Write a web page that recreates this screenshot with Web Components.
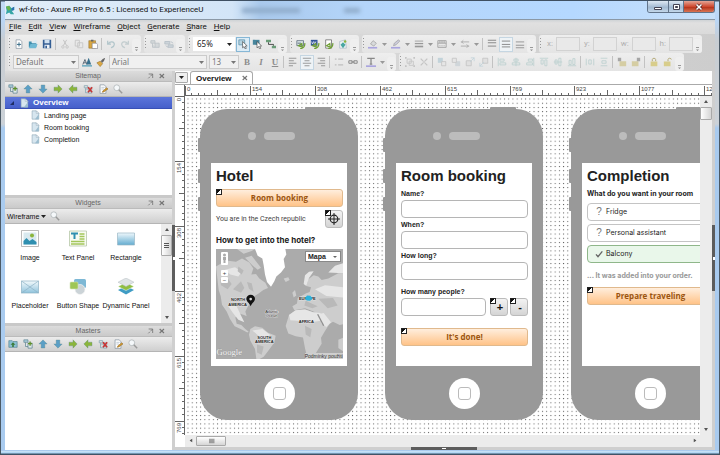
<!DOCTYPE html>
<html lang="en">
<head>
<meta charset="utf-8">
<title>wf-foto - Axure RP Pro 6.5</title>
<style>
  html, body { height: 100%; }
  body { margin: 0; font-family: "Liberation Sans", sans-serif; font-size: 7px; color: #222; background: #44535f; overflow: hidden; }
</style>
</head>
<body>
<ax-window>
  <ax-titlebar slot="title">wf-foto - Axure RP Pro 6.5 : Licensed to ExperienceU</ax-titlebar>
  <ax-menubar slot="menu" items="File,Edit,View,Wireframe,Object,Generate,Share,Help"></ax-menubar>

  <ax-toolrow slot="tools">
    <ax-group icons="new,open,save,|,cut,copy,paste,|,undo,redo"></ax-group>
    <ax-group icons="tree-off,swap-off"></ax-group>
    <ax-group icons="point!,select,connect"><ax-combo value="65%" label="Zoom" wide="42"></ax-combo></ax-group>
    <ax-group icons="gen1,gen2,gen3,gen4"></ax-group>
    <ax-group icons="fill,v,line,v,width,v,pattern,v,arrows,v,|,vtop,vmid!,vbot"></ax-group>
    <ax-group><ax-coord name="x"></ax-coord><ax-coord name="y"></ax-coord><ax-coord name="w"></ax-coord><ax-coord name="h"></ax-coord></ax-group>
  </ax-toolrow>
  <ax-toolrow slot="tools">
    <ax-group icons="bold,italic,under,|,left,center!,right,|,bullets,link,|,tcolor,v">
      <ax-combo value="Default" label="Style" wide="66" dim></ax-combo>
      <ax-tool name="styles"></ax-tool><ax-tool name="brush"></ax-tool>
      <ax-combo value="Arial" label="Font" wide="98" dim></ax-combo>
      <ax-combo value="13" label="Size" wide="30" dim></ax-combo>
    </ax-group>
    <ax-group icons="group,ungroup,|,front,back,fwd,bwd,|,al,ac,ar,at,am,ab,|,dh,dv,|,lock1,lock2,|,pad,unpad"></ax-group>
  </ax-toolrow>

  <ax-sidebar slot="side">
    <ax-panel heading="Sitemap" icons="addtree,up,down,rightg,leftg,delete,rename,find">
      <ax-tree></ax-tree>
    </ax-panel>
    <ax-panel heading="Widgets" library="Wireframe">
      <ax-library></ax-library>
    </ax-panel>
    <ax-panel heading="Masters" icons="addfolder,addtree,up,down,rightg,leftg,delete,rename,find"></ax-panel>
  </ax-sidebar>

  <ax-editor slot="main">
    <ax-phone style="left:15px">
      <ax-heading>Hotel</ax-heading>
      <ax-action noted>Room booking</ax-action>
      <ax-locate>You are in the Czech republic</ax-locate>
      <ax-caption size="large">How to get into the hotel?</ax-caption>
      <ax-map></ax-map>
    </ax-phone>
    <ax-phone style="left:200px">
      <ax-heading>Room booking</ax-heading>
      <ax-field label="Name?"></ax-field>
      <ax-field label="When?"></ax-field>
      <ax-field label="How long?"></ax-field>
      <ax-field label="How many people?" stepper></ax-field>
      <ax-action noted>It's done!</ax-action>
    </ax-phone>
    <ax-phone style="left:386px">
      <ax-heading>Completion</ax-heading>
      <ax-caption>What do you want in your room</ax-caption>
      <ax-options></ax-options>
      <ax-caption muted>... It was added into your order.</ax-caption>
      <ax-action noted>Prepare traveling</ax-action>
    </ax-phone>
  </ax-editor>
</ax-window>

<script>
const G = '#8bb53c', B = '#5b9fc6', N = '#9a9a9a', L = '#c4c4c4', T = '#bcd0cf';
const page = '<path d="M2.500 1h5l2 2.300v8h-7z" fill="#fff" stroke="#7d8c9a" stroke-width=".8"/>';
const lines = (c, xs) => xs.map(([x1, x2, y]) => `<path d="M${x1} ${y}H${x2}" stroke="${c}"/>`).join('');
const treeBox = c => `<path d="M1.500 2h4v2.500h-4zM6.500 4.500h4v3h-4zM6.500 9h4v2h-4zM3 5v5.500h3M3 6h3" fill="none" stroke="${c}"/>`;
const arrow = (c, r) => `<path transform="rotate(${r} 6 6)" d="M6 1l5 5H8.200v4.800H3.800V6H1z" fill="${c}" stroke="#5a8a8a" stroke-width=".4"/>`;
const alignBars = d => `<path d="${d}" fill="none" stroke="${T}"/>`;
const leaf = `<path d="M5 11.500c4 0 6-3 5.500-6.500M3 8l4-2.500L7.500 10z" fill="none" stroke="#6f9f35" stroke-width="1.500"/>`;
const ICONS = {
  new: page + '<path d="M6 4v5M3.500 6.500h5" stroke="#3a6d88" stroke-width="1.200"/>',
  open: '<path d="M1 10V3h3l1 1h5v6z" fill="#3f8eae"/><path d="M4 4l6-3 1 4H5z" fill="#d9eaf2"/><path d="M1 11l2-5h8.500l-2 5z" fill="#6fb9d4"/>',
  save: '<path d="M1 1h10v10H1z" fill="#345e94"/><path d="M3 1h6v4H3z" fill="#cfe0f0"/><path d="M3 7h6v4H3z" fill="#eef3f8"/><path d="M4 8h2v3H4z" fill="#345e94"/>',
  cut: `<path d="M4 1l4 7M8 1L4 8" stroke="${L}" stroke-width="1.200"/><circle cx="3.500" cy="9.500" r="1.500" fill="none" stroke="${L}"/><circle cx="8.500" cy="9.500" r="1.500" fill="none" stroke="${L}"/>`,
  copy: `<path d="M1.500 1.500h5v7h-5zM4.500 4.500h6v6h-6z" fill="#e8e8e8" stroke="${L}"/>`,
  paste: '<path d="M1 2h8v9H1z" fill="#d9a640" stroke="#8a6a28" stroke-width=".6"/><path d="M3.500 1h3v2h-3z" fill="#666"/><path d="M5 5h5l1.500 1.500V11.500H5z" fill="#fff" stroke="#778" stroke-width=".7"/>',
  undo: '<path d="M2 2v4h4M2.500 6C5 2 10 3 10 6.500 10 9 7 10 6 10.500" fill="none" stroke="#b3c6cb" stroke-width="1.500"/>',
  redo: '<path d="M10 2v4H6M9.500 6C7 2 2 3 2 6.500 2 9 5 10 6 10.500" fill="none" stroke="#c3cdcf" stroke-width="1.500"/>',
  'tree-off': `<path d="M1 2h5v3H1zM6 5h5v5H6zM3 5v5h3" fill="#d4d8da" stroke="#bcc3c6"/>`,
  'swap-off': `<path d="M1 3h6v3H1zM5 7h6v3H5zM8 3l3 2M2 8l3 2" fill="#cdd4da" stroke="#b5bec6"/>`,
  point: '<path d="M1 1h7v6H1z" fill="#b5d3e0" stroke="#4e87a0" stroke-width=".8"/><path d="M5.500 3l5.500 5.300-2.300.2 1.300 2.700-1.500.6-1.200-2.700-1.800 1.500z" fill="#fff" stroke="#333" stroke-width=".7"/>',
  select: '<path d="M1 1h8v6H1z" fill="#47859c"/><path d="M6 3l5.500 5.300-2.300.2 1.300 2.700-1.500.6-1.200-2.700-1.800 1.500z" fill="#fff" stroke="#333" stroke-width=".7"/>',
  connect: '<path d="M0 1h6v3H0zM7 8h5v3H7z" fill="#6a9c78"/><path d="M3 4v2.500h6V8" fill="none" stroke="#333"/>',
  gen1: '<path d="M1 2h8v6H1z" fill="#dce7ea" stroke="#456" stroke-width=".8"/><path d="M2 5h4" stroke="#456"/>' + leaf,
  gen2: '<path d="M1 1h8v7H1z" fill="#31559a"/><path d="M2 3l1 3 1.500-3L6 6l1-3" fill="none" stroke="#fff" stroke-width=".8"/>' + leaf,
  gen3: '<path d="M2 1h7v10H2z" fill="#fff" stroke="#555" stroke-width=".8"/>' + leaf,
  gen4: '<path d="M2 3l7-2 1 10H2z" fill="#eef4f4" stroke="#9ab" stroke-width=".7"/><path d="M3 7l3-3 3 3-3 4z" fill="#49a6a2"/><circle cx="8.500" cy="3" r="1.500" fill="#8bb53c"/>',
  fill: `<path d="M3 6l3-4 4 3-3 3.500z" fill="#d8dadc" stroke="${N}" stroke-width=".8"/><path d="M0 9.500h11v2H0z" fill="#a9a4de"/>`,
  line: `<path d="M3 8l1-3 5-4 1.500 1.500L6 7z" fill="#ccd" stroke="${N}" stroke-width=".8"/><path d="M0 9.500h11v2H0z" fill="#a9a4de"/>`,
  width: `<path d="M1 2.500h10" stroke="#999"/><path d="M1 5.500h10" stroke="#999" stroke-width="1.500"/><path d="M1 9h10" stroke="#999" stroke-width="2"/>`,
  pattern: `<path d="M1 2h10v8H1zM1 5h10M3.500 2v3M6 2v3M8.500 2v3M3 8h1M5.500 8h1M8 8h1" fill="none" stroke="${N}"/>`,
  arrows: `<path d="M1 3.500h10M1 8.500h10M4 1.500L2 3.500l2 2M8 6.500l2 2-2 2" fill="none" stroke="#a5a5a5"/>`,
  vtop: lines('#777', [[1, 11, 1.5], [1, 11, 4.5], [1, 11, 8.5]]),
  vmid: lines('#777', [[1, 11, 2.5], [1, 11, 6.5], [1, 11, 9.5]]),
  vbot: lines('#888', [[1, 11, 3.5], [1, 11, 7.5], [1, 11, 10.5]]),
  left: lines('#888', [[1, 10, 1.5], [1, 7, 4.5], [1, 10, 7.5], [1, 6, 10.5]]),
  center: lines('#888', [[1, 11, 1.5], [3, 9, 4.5], [1, 11, 7.5], [3, 9, 10.5]]),
  right: lines('#888', [[2, 11, 1.5], [5, 11, 4.5], [2, 11, 7.5], [6, 11, 10.5]]),
  bullets: lines('#aaa', [[1, 3, 2.5], [5, 11, 2.5], [1, 3, 9.5], [5, 11, 9.5]]),
  link: '<path d="M1 4.500h4v3H1zM7 4.500h4v3H7zM4 6h4" fill="none" stroke="#8b8b8b" stroke-width="1.200"/>',
  tcolor: '<path d="M1.500 1.500h9M6 1.500v7M4.500 8.500h3" stroke="#888" stroke-width="1.500"/><path d="M0 10h12v2H0z" fill="#a9a4de"/>',
  styles: '<path d="M1 9l2.500-6L6 9M2 7h3" fill="none" stroke="#456"/><path d="M5 9l3-8 3 8z" fill="#38708e"/><path d="M0 10h12v1.500H0z" fill="#4f9db8"/>',
  brush: '<path d="M1 7l4-2 3 3-3 3.500z" fill="#dba742" stroke="#8a6a28" stroke-width=".6"/><path d="M5.500 5L8 2.500l3-1.500-1 3-2 3z" fill="#666"/>',
  group: `<path d="M2.500 2.500h5v5h-5zM5 5h5v5H5z" fill="none" stroke="${L}"/><path d="M0 0h2v2H0zM10 0h2v2h-2zM0 10h2v2H0zM10 10h2v2h-2z" fill="${L}"/>`,
  ungroup: `<path d="M2 2l3 3M10 2L7 5M2 10l3-3M10 10L7 7" stroke="${L}" stroke-width="1.500"/><path d="M5 5h2v2H5z" fill="${L}"/>`,
  front: `<path d="M1 1h6v6H1z" fill="#c2d3da"/><path d="M5.500 5.500h5v5h-5z" fill="#e6e6e6" stroke="${L}"/>`,
  back: `<path d="M5 5h6v6H5z" fill="#d0d6da"/><path d="M1.500 1.500h5v5h-5z" fill="#e6e6e6" stroke="${L}"/>`,
  fwd: `<path d="M1.500 4.500h6v6h-6z" fill="#e0e0e0" stroke="${L}"/><path d="M6 6l5-5M7 1h4v4" fill="none" stroke="#c2d3da"/>`,
  bwd: `<path d="M4.500 1.500h6v6h-6z" fill="#e0e0e0" stroke="${L}"/><path d="M6 6l-5 5M1 7v4h4" fill="none" stroke="#c2d3da"/>`,
  al: alignBars('M1.500 1v10M3.500 2.500h5v2.500h-5zM3.500 7h7v2.500h-7z'),
  ac: alignBars('M6 1v10M3.500 2.500h5v2.500h-5zM1.500 7h9v2.500h-9z'),
  ar: alignBars('M10.500 1v10M4 2.500h5v2.500H4zM2 7h7v2.500H2z'),
  at: alignBars('M1 1.500h10M2.500 3.500h2.500v5H2.500zM7 3.500h2.500v7H7z'),
  am: alignBars('M1 6h10M2.500 3.500h2.500v5H2.500zM7 1.500h2.500v9H7z'),
  ab: alignBars('M1 10.500h10M2.500 4h2.500v5H2.500zM7 2h2.500v7H7z'),
  dh: alignBars('M1.500 2v8M10.500 2v8M4.500 3.500h3v5h-3z'),
  dv: alignBars('M2 1.500h8M2 10.500h8M3.500 4.500h5v3h-5z'),
  lock1: `<path d="M3 5h8v6H3z" fill="#d5cda3"/><path d="M1 1h4v4H1z" fill="#a6a6a6"/>`,
  lock2: `<path d="M1 5h8v6H1z" fill="#d5cda3"/><path d="M7 1h4v4H7z" fill="#a6a6a6"/>`,
  pad: '<path d="M2 5.500h8V11H2z" fill="#d8cd8b"/><path d="M4 5V3c0-2 4-2 4 0v2" fill="none" stroke="#b5ac7c" stroke-width="1.200"/>',
  unpad: '<path d="M1 5.500h8V11H1z" fill="#d8cd8b"/><path d="M6 5V3c0-2 4-2 4 0" fill="none" stroke="#b5ac7c" stroke-width="1.200"/>',
  addtree: `<path d="M1 1h5v3H1z" fill="#a9cbd8" stroke="#53798a" stroke-width=".7"/><path d="M6 5h5v6H6zM3 4v5h3" fill="#dfe9ea" stroke="#53798a" stroke-width=".8"/><path d="M8.500 3v5M6 5.500h5" stroke="#5f8f2c" stroke-width="1.600"/>`,
  addfolder: '<path d="M1 10V2h4l1 1h5v7z" fill="#8cc0d2" stroke="#48798c" stroke-width=".7"/><path d="M6 4l3 3H7v2.500H5V7H3z" fill="#3d7c3c"/>',
  up: arrow(B, 0), down: arrow(B, 180), rightg: arrow(G, 90), leftg: arrow(G, 270),
  delete: treeBox('#8ba9b5') + '<path d="M6 4l5 6M11 4l-5 6" stroke="#cb3232" stroke-width="1.800"/>',
  rename: page + '<path d="M4 4h4M4 6h3" stroke="#9ab" stroke-width=".7"/><path d="M5 10l1-2 4.500-3.500 1.500 1.500L7 9.500z" fill="#d59c2f" stroke="#765015" stroke-width=".5"/>',
  find: '<circle cx="4.500" cy="4.500" r="3.500" fill="#f5f8fa" stroke="#b2b8bb"/><path d="M7 7l4 4" stroke="#9b9b9b" stroke-width="1.800"/>',
  doc: '<path d="M2.500 1h5l3 3v7h-8z" fill="#d7e6ef" stroke="#8ca5b5" stroke-width=".7"/><path d="M7.500 1v3h3z" fill="#fff" stroke="#8ca5b5" stroke-width=".6"/><path d="M6 11l4.500-6v6z" fill="#9cbdcf"/>',
  pin: '<path d="M2.500 3h6v6M8.500 3L5.500 6M2 9.500l2.500-2.500" fill="none" stroke="#777" stroke-width="1.300"/>',
  close: '<path d="M2.500 3l6.500 6M9 3l-6.500 6" stroke="#777" stroke-width="1.700"/>',
  target: '<circle cx="6" cy="6" r="3.800" fill="none" stroke="#222" stroke-width="1.200"/><path d="M6 0v12M0 6h12" stroke="#222"/>',
  check: '<path d="M1.500 6.500l3 3.500L11 2" fill="none" stroke="#666" stroke-width="2"/>',
  logo: '<path d="M1 2l4-1 3 3 3-2v4L8 7l3 4H7L5 9l-4 2 1-4z" fill="#35a6a6"/><path d="M1 2l4-1 2 4-3 2z" fill="#6ab54b"/><path d="M8 4l3-2v4L8 7z" fill="#2b6fb0"/>',
  image: '<path d="M.5.500h17v16H.500z" fill="#fff" stroke="#aaa" stroke-width=".8"/><path d="M2.500 2.500h13v12h-13z" fill="#d9e9ef"/><circle cx="11" cy="5.500" r="2" fill="#8bb53c"/><path d="M2.500 14.500V11l3-3 3 3 3-2 4 3v2.500z" fill="#2f8fb0"/>',
  text: '<path d="M.5 1h17v15H.500z" fill="#f8fbf2" stroke="#b8c8a8" stroke-width=".8"/><path d="M2 3.500h7M5.500 3.500V9" stroke="#2f8fb0" stroke-width="2"/><path d="M10.500 4h5M10.500 6.500h5M10.500 9h5M2 11.500h13.500M2 14h13.500" stroke="#a3c65a" stroke-width="1.300"/>',
  rect: '<defs><linearGradient id="g" x2="0" y2="1"><stop stop-color="#eff8fc"/><stop offset="1" stop-color="#63acd0"/></linearGradient></defs><path d="M.5 3h17v12H.500z" fill="url(#g)" stroke="#9bb7c5" stroke-width=".7"/>',
  placeholder: '<defs><linearGradient id="h" x2="0" y2="1"><stop stop-color="#f4fafc"/><stop offset="1" stop-color="#8fc3dc"/></linearGradient></defs><path d="M.5 3h17v12H.500zM.5 3l17 12M17.500 3L.500 15" fill="url(#h)" stroke="#8db2c4" stroke-width=".7"/>',
  shape: '<rect x="5" y="1" width="12" height="9" rx="1.500" fill="#7db8d5"/><circle cx="11" cy="11.500" r="5" fill="#cbd3d7" stroke="#f3f3f3" stroke-width=".7"/><rect x="1" y="4" width="8" height="7" rx="1" fill="#9ec655" stroke="#d4e4b8" stroke-width=".6"/>',
  dynamic: '<path d="M9 8l8 4-8 4.500L1 12z" fill="#3f9cc4"/><path d="M9 4.500l8 4-8 4-8-4z" fill="#8fbe41" stroke="#fff" stroke-width=".5"/><path d="M9 0l8 4.200-8 4.300-8-4.300z" fill="#dfe4e6" stroke="#b5bdc0" stroke-width=".5"/>'
};
const LETTERS = { bold: '<b>B</b>', italic: '<i>I</i>', under: '<u>U</u>' };
const svg = (name, size = 10) => {
  const box = ['image', 'text', 'rect', 'placeholder', 'shape', 'dynamic'].includes(name) ? 18 : 12;
  return `<svg width="${size}" height="${size}" viewBox="0 0 ${box} ${box}" fill="none" aria-hidden="true">${ICONS[name] || ''}</svg>`;
};
const RESET = `:host,*{box-sizing:border-box} button,input,select{font:inherit;color:inherit;margin:0;padding:0;border:0;background:none;border-radius:0;min-width:0} svg{display:block;flex:none}`;
const NOTE = `.note{position:absolute;left:0;top:0;width:6px;height:6px;border:1px solid #222;background:linear-gradient(135deg,#111 50%,#fff 50%)}`;
const define = (tag, render) => customElements.define(tag, class extends HTMLElement {
  connectedCallback() {
    if (this.shadowRoot) return;
    const root = this.attachShadow({ mode: 'open' });
    const t = document.createElement('template');
    t.innerHTML = render(this).replace('<style>', '<style>' + RESET);
    root.append(t.content.cloneNode(true));
  }
});

define('ax-window', () => `<style>
  :host{display:grid;grid-template-rows:auto auto auto minmax(0,1fr);height:100vh;padding:1px 5px 5px;overflow:hidden;border-radius:4px;
    background:linear-gradient(90deg,#4c5a66 1px,transparent 1px,transparent calc(100% - 1px),#4c5a66 calc(100% - 1px)),
    linear-gradient(0deg,#3f5468 1px,#a9d4f5 2px,#cfe4f6 4px,transparent 4px),
    linear-gradient(180deg,#3f5062 1px,#c3dbf4 2px,#b9d7f8 19px,#c8cdd2 40px,#ccd2d8 124px,#a9cbef 128px)}
  .tools{background:linear-gradient(90deg,#e0e0e0,#dadada 40%,#cdcdcd);padding:1px 3px 0;display:grid;gap:1px}
  .body{display:grid;grid-template-columns:167px 3px minmax(0,1fr) 3px;grid-template-rows:minmax(0,1fr) 3px;background:#cfcfcf;min-height:0}
  slot{display:block;min-height:0}
  slot[name=side]{grid-area:1/1/3/2}
  slot[name=main]{grid-area:1/3}
  .grip{grid-area:1/2;background:#5d5d5d;align-self:center;height:66px;margin-bottom:2px;display:grid;place-items:center}
  .grip.end{grid-area:1/4}
  .grip::after{content:"";width:2px;height:3px;background:#fff}
  .grip.foot{grid-area:2/3;width:66px;height:3px;justify-self:center;margin:0}
  .grip.foot::after{width:4px;height:1px}
  </style><slot name="title"></slot><slot name="menu"></slot><div class="tools"><slot name="tools"></slot></div>
  <div class="body"><slot name="side"></slot><div class="grip"></div><slot name="main"></slot><div class="grip end"></div><div class="grip foot"></div></div>`);

define('ax-titlebar', () => `<style>
  :host{display:flex;align-items:center;height:18px;font:8px/10px Roboto,sans-serif;color:#111;gap:4px;
   background:linear-gradient(90deg,#e1edf8 0,#d3e5f7 32%,#a9c9ec 36%,#b4d5fa 50%,#b5d8ff 80%,#c8e0f8)}
  .ghost{display:flex;gap:44px;margin-left:34px;flex:1;filter:blur(2px)}
  .ghost i{width:58px;height:5px;background:#8fabc9}.ghost i+i{width:16px}
  .ctl{display:flex;align-self:flex-start;border:1px solid #61748a;border-top:0;border-radius:0 0 3px 3px;overflow:hidden}
  button{height:11px;width:21px;display:grid;place-items:center;background:linear-gradient(#dde8f3,#a9bfd6 50%,#9cb5cd 51%,#c3d7ea);border-right:1px solid #61748a}
  button:nth-child(2){width:15px}
  button:last-child{width:30px;border:0;background:linear-gradient(#e3a596,#cf4a31 50%,#b22c14 51%,#d87554)}
  </style>${svg('logo')}<span><slot></slot></span><div class="ghost"><i></i><i></i></div>
  <div class="ctl"><button aria-label="Minimize"><svg width="10" height="8"><path d="M1.500 4.500h7v2h-7z" fill="#fff" stroke="#445"/></svg></button>
  <button aria-label="Maximize"><svg width="9" height="8"><path d="M1.500 1.500h6v5h-6z" fill="#fff" stroke="#445"/><path d="M3.500 3.500h2v1h-2z" stroke="#445"/></svg></button>
  <button aria-label="Close"><svg width="8" height="8"><path d="M1.500 1.500l5 5M6.500 1.500l-5 5" stroke="#522" stroke-width="3"/><path d="M1.500 1.500l5 5M6.500 1.500l-5 5" stroke="#fff" stroke-width="1.500"/></svg></button></div>`);

define('ax-menubar', el => `<style>
  :host{display:flex;gap:7px;height:15px;padding-left:4px;align-items:center;font:8px/12px Roboto,sans-serif;background:linear-gradient(#cfd3d6,#e0e0e0 3px,#dadada);border-top:1px solid #8b98a5;color:#111}
  </style>${el.getAttribute('items').split(',').map(i => `<button><u>${i[0]}</u>${i.slice(1)}</button>`).join('')}`);

define('ax-toolrow', () => `<style>:host{display:flex;gap:3px;height:18px;min-width:0}</style><slot></slot>`);

define('ax-tool', el => { const n = el.getAttribute('name'); return `<style>
  :host{display:block;flex:none}
  button{display:grid;place-items:center;width:14px;height:15px;font:bold 9px/12px "Liberation Serif",serif;color:#8d8d8d}
  :host([active]) button{border:1px solid #86b7d6;background:#dcecf6}
  :host([dim][active]) button{border-color:#c5d6e2;background:#eef3f6}
  </style><button aria-label="${n}">${LETTERS[n] || svg(n)}</button>`; });

define('ax-group', el => `<style>
  :host{display:flex;align-items:center;background:linear-gradient(#eeeeee,#e4e4e4);border-radius:3px;padding-left:4px;position:relative;flex:none}
  :host::before{content:"";position:absolute;left:1px;top:3px;bottom:3px;width:1px;background:repeating-linear-gradient(#999 0 1px,transparent 1px 3px)}
  .s{width:1px;height:12px;background:#c2c2c2;margin:0 2px 0 1px}
  .v{width:9px;height:12px;display:grid;place-items:center}
  .o{width:9px;height:14px;align-self:flex-end;display:grid;place-items:end center;padding-bottom:1px;background:#efefef;border-radius:3px}
  </style><slot></slot>${(el.getAttribute('icons') || '').split(',').filter(Boolean).map(n =>
    n === '|' ? '<span class="s"></span>' :
    n === 'v' ? '<span class="v"><svg width="5" height="3"><path d="M0 0h5L2.500 3z" fill="#999"/></svg></span>' :
    `<ax-tool name="${n.replace('!', '')}" ${n.endsWith('!') ? 'active' : ''} ${n[0] === 'p' ? '' : 'dim'}></ax-tool>`).join('')}
  <button class="o" aria-label="More"><svg width="5" height="5"><path d="M1 .5h3" stroke="#999"/><path d="M1 2.500h3L2.500 4z" fill="#888"/></svg></button>`);

define('ax-combo', el => `<style>
  :host{display:block;position:relative;width:${el.getAttribute('wide')}px;margin:0 1px;font:8px/12px "Noto Sans",sans-serif;color:#222}
  :host([dim]){color:#777}
  select{appearance:none;width:100%;height:14px;background:#fff;padding:0 10px 0 4px}
  :host([dim]) select{background:#f0f0f0;border:1px solid #cbcbcb;padding-left:2px}
  svg{position:absolute;right:3px;top:6px;pointer-events:none}
  </style><select aria-label="${el.getAttribute('label')}"><option>${el.getAttribute('value')}</option></select>
  <svg width="5" height="3"><path d="M0 0h5L2.500 3z" fill="currentColor"/></svg>`);

define('ax-coord', el => `<style>
  :host{display:block;font:8px/12px Roboto,sans-serif;color:#b0b0b0}
  label{display:flex;align-items:center;gap:3px;margin-left:4px}
  input{width:24px;height:14px;border:1px solid #d2d2d2;background:#e9e9e9}
  </style><label>${el.getAttribute('name')}:<input></label>`);

define('ax-sidebar', () => `<style>:host{display:grid;grid-template-rows:repeat(3,minmax(0,1fr));gap:3px;height:100%;background:#c9c9c9}</style><slot></slot>`);

define('ax-panel', el => `<style>
  :host{display:grid;grid-template-rows:auto auto minmax(0,1fr);background:#fff;min-height:0;overflow:hidden}
  header{display:flex;align-items:center;height:11px;padding:0 3px 0 24px;background:linear-gradient(#dcdcdc,#cacaca);border-bottom:1px solid #bbb;color:#666}
  h2{flex:1;margin:0;font-size:7px;line-height:10px;font-weight:400;text-align:center}
  header button{width:11px}
  nav{display:flex;align-items:center;height:15px;padding:0 1px;gap:1px;background:linear-gradient(#ececec,#cfcfcf);border-bottom:1px solid #b5b5b5;color:#111}
  .lib{display:flex;align-items:center;gap:2px;margin:0 1px}
  </style><header><h2>${el.getAttribute('heading')}</h2><button aria-label="Undock">${svg('pin', 8)}</button><button aria-label="Close">${svg('close', 8)}</button></header>
  <nav>${el.hasAttribute('library') ? `<button class="lib">${el.getAttribute('library')}<svg width="5" height="3"><path d="M0 0h5L2.500 3z" fill="#222"/></svg></button><ax-tool name="find"></ax-tool>` :
    el.getAttribute('icons').split(',').map(n => `<ax-tool name="${n}"></ax-tool>`).join('')}</nav><slot></slot>`);

define('ax-tree', () => `<style>
  :host{display:block;font-size:7px;color:#111}
  ul{list-style:none;margin:0;padding:0}
  a{display:flex;align-items:center;height:12px;gap:4px;padding-left:25px;color:inherit;text-decoration:none}
  a.on{background:linear-gradient(#5b75da,#4660cb);color:#fff;font-weight:700;font-size:8px;padding-left:4px;border-bottom:1px solid #3850b5}
  </style><ul><li><a href="#overview" class="on"><svg width="6" height="6"><path d="M5 1v4H1z" fill="#1d2d66"/></svg>${svg('doc')}Overview</a>
  <ul>${['Landing page', 'Room booking', 'Completion'].map(t => `<li><a href="#page">${svg('doc')}${t}</a></li>`).join('')}</ul></li></ul>`);

define('ax-scroll', () => `<style>
  :host{display:flex;flex-direction:column;align-items:stretch;background:#ececec;min-width:0;min-height:0}
  :host([across]){flex-direction:row}
  button{width:11px;height:11px;display:grid;place-items:center;flex:none}
  .thumb{height:var(--thumb,13px);border:1px solid #a9a9a9;border-radius:1px;background:linear-gradient(90deg,#fff,#d5d5d5);display:grid;place-items:center}
  :host([across]) .thumb{height:auto;width:30px;margin:1px 0;background:linear-gradient(#fff,#d5d5d5)}
  .track{flex:1}
  :host([across]) svg{transform:rotate(-90deg)} :host([across]) .thumb svg{transform:rotate(90deg)}
  :host([plain]) .thumb svg{display:none}
  </style><button aria-label="Back"><svg width="4" height="3"><path d="M0 3h4L2 0z" fill="#555"/></svg></button><div class="thumb"><svg width="5" height="6"><path d="M0 .5h5M0 2.500h5M0 4.500h5" stroke="#555"/></svg></div><div class="track"></div>
  <button aria-label="Forward"><svg width="4" height="3"><path d="M0 0h4L2 3z" fill="#555"/></svg></button>`);

define('ax-library', () => `<style>
  :host{display:grid;grid-template-columns:minmax(0,1fr) 11px;min-height:0;color:#111}
  .items{display:grid;grid-template-columns:repeat(3,48px);grid-auto-rows:48px;padding-left:1px;align-content:start;overflow:hidden}
  button{display:flex;flex-direction:column;align-items:center;justify-content:flex-start;padding-top:6px;gap:5px;white-space:nowrap;line-height:9px}
  ax-scroll{--thumb:21px}
  </style><div class="items">${[['image', 'Image'], ['text', 'Text Panel'], ['rect', 'Rectangle'], ['placeholder', 'Placeholder'], ['shape', 'Button Shape'], ['dynamic', 'Dynamic Panel']]
    .map(([i, t]) => `<button>${svg(i, 18)}<span>${t}</span></button>`).join('')}</div><ax-scroll></ax-scroll>`);

/* A tick every tenth of a step; the number of steps drawn follows the element's size. */
customElements.define('ax-ruler', class extends HTMLElement {
  connectedCallback() {
    if (this.shadowRoot) return;
    this.attachShadow({ mode: 'open' }).innerHTML = `<style>
    :host{display:block;overflow:hidden;background:#fff;min-width:0;min-height:0;border-bottom:1px solid #666}
    :host([down]){border-bottom:0;border-right:1px solid #666}
    svg{display:block} text{font:6px "Liberation Sans",sans-serif;fill:#444;stroke:none}</style><svg stroke="#666"></svg>`;
    new ResizeObserver(() => this.draw()).observe(this);
    this.draw();
  }
  draw() {
    const down = this.hasAttribute('down'), step = 64.9, size = down ? this.clientHeight : this.clientWidth;
    let s = '';
    for (let k = 0; k * step < size; k++) {
      const p = Math.round(k * step);
      s += `<text ${down ? `transform="translate(6 ${p + 2}) rotate(-90)" text-anchor="end"` : `x="${p + 2}" y="6"`}>${Math.round(k * 153.85)}</text>`;
      for (let i = 0; i < 10; i++) {
        const q = Math.round(k * step + i * step / 10) + .5, len = i === 0 ? 10 : i === 5 ? 6 : 3;
        s += `<path d="${down ? `M10 ${q}h-${len}` : `M${q} 11v-${len}`}"/>`;
      }
    }
    const g = this.shadowRoot.querySelector('svg');
    g.setAttribute('width', down ? 10 : size);
    g.setAttribute('height', down ? size : 10);
    g.innerHTML = s;
  }
});

define('ax-editor', () => `<style>
  :host{display:grid;grid-template-rows:14px minmax(0,1fr);height:100%;background:#fff}
  .tabs{display:flex;align-items:flex-end;gap:2px;border-bottom:1px solid #aaa;background:#fff}
  .menu{width:13px;height:11px;margin-bottom:1px;border:1px solid #aaa;border-radius:1px;display:grid;place-items:center;background:#efefef}
  .tab{display:flex;align-items:center;gap:9px;height:13px;padding:0 3px 0 5px;border:1px solid #aaa;border-bottom:0;border-radius:3px 3px 0 0;font-weight:700;font-size:8px;color:#111}
  .work{display:grid;grid-template-columns:10px minmax(0,1fr) 12px;grid-template-rows:11px minmax(0,1fr) 12px;min-height:0}
  .corner{border-right:1px solid #666}
  .h{grid-column:2/4}
  .stage{position:relative;overflow:hidden;min-width:0;min-height:0}
  .dots{position:absolute;inset:0;width:100%;height:100%}
  .bottom{grid-column:2/4;padding-right:12px;background:#ececec}
  .blank{background:#fff}
  </style><div class="tabs"><button class="menu" aria-label="Pages"><svg width="5" height="3"><path d="M0 0h5L2.500 3z" fill="#222"/></svg></button><div class="tab"><span>Overview</span><button aria-label="Close tab">${svg('close', 8)}</button></div></div>
  <div class="work"><div class="corner"></div><ax-ruler class="h"></ax-ruler><ax-ruler down></ax-ruler>
  <div class="stage"><svg class="dots"><defs><pattern id="d" width="4.220" height="4.220" patternUnits="userSpaceOnUse"><path d="M2.500 2.500h1v1h-1z" fill="#555"/></pattern></defs><rect width="100%" height="100%" fill="url(#d)"/></svg><slot></slot></div>
  <ax-scroll plain></ax-scroll><div class="blank"></div><ax-scroll across class="bottom"></ax-scroll></div>`);

define('ax-phone', () => `<style>
  :host{position:absolute;top:13px;width:158px;display:block;background:#999;border-radius:27px}
  .k{position:absolute;background:#999;left:-2px;width:3px;height:14px;border-radius:1px}
  .top{left:105px;top:-2px;width:26px;height:3px}
  .ear{display:flex;align-items:center;gap:8px;height:54px;padding-left:48px}
  .ear i{width:8px;height:8px;border-radius:4px;background:#bcbcbc}.ear i+i{width:31px}
  .screen{margin:0 11px;background:#fff;min-height:203px;padding:4px 4px 6px 5px}
  .home{height:54px;display:grid;place-items:center}
  button{width:31px;height:31px;border-radius:50%;background:#fff;display:grid;place-items:center}
  button::after{content:"";width:11px;height:11px;border:1px solid #bbb;border-radius:3px}
  </style><span class="k top"></span><span class="k" style="top:29px"></span><span class="k" style="top:60px"></span><span class="k" style="top:88px"></span>
  <div class="ear"><i></i><i></i></div><div class="screen"><slot></slot></div><div class="home"><button aria-label="Home"></button></div>`);

define('ax-heading', () => `<style>:host{display:block}h1{margin:0 0 4px;font-size:15px;line-height:18px;font-weight:700;color:#222;white-space:nowrap}</style><h1><slot></slot></h1>`);

define('ax-action', () => `<style>${NOTE}
  :host{display:block;position:relative}
  :host(:last-child){margin-top:12px}
  button{display:block;width:100%;height:18px;border:1px solid #e0b98d;border-radius:3px;background:linear-gradient(#ffeedd,#ffc388);color:#9b5510;font:bold 8px/12px "Open Sans",sans-serif}
  </style><button><slot></slot></button><span class="note"></span>`);

define('ax-locate', () => `<style>${NOTE}
  :host{display:flex;align-items:center;justify-content:space-between;margin:3px 0 7px;color:#444;white-space:nowrap;font:7px/10px Roboto,sans-serif}
  div{position:relative}
  button{width:18px;height:18px;border:1px solid #bbb;border-radius:3px;background:linear-gradient(#f3f3f3,#d4d4d4);display:grid;place-items:center}
  </style><span><slot></slot></span><div><button aria-label="Locate">${svg('target', 12)}</button><span class="note"></span></div>`);

define('ax-caption', () => `<style>
  :host{display:block;font:bold 7px/10px Inter,sans-serif;white-space:nowrap;margin-bottom:4px;color:#222}
  :host([size=large]){font-size:8px}
  :host([muted]){color:#999;margin:8px 0 -6px}
  </style><slot></slot>`);

define('ax-field', el => {
  const step = el.hasAttribute('stepper');
  return `<style>${NOTE}
  :host{display:block;margin-bottom:2px}
  :host([stepper]){margin-top:7px;margin-bottom:0}
  label{display:block;font-weight:700;line-height:10px;margin-bottom:1px}
  .row{display:flex;gap:2px}
  input{flex:1;width:100%;height:18px;border:1px solid #b5b5b5;border-radius:4px;background:#fff;padding:0 4px}
  :host([stepper]) input{margin-right:2px}
  .b{position:relative}
  button{width:18px;height:18px;border:1px solid #bbb;border-radius:3px;background:linear-gradient(#f3f3f3,#d4d4d4);font:bold 11px/14px "Liberation Sans",sans-serif;color:#111;padding-left:2px}
  </style><label for="f">${el.getAttribute('label')}</label><div class="row"><input id="f">${step ? ['+', '-'].map(c => `<div class="b"><button>${c}</button><span class="note"></span></div>`).join('') : ''}</div>`;
});

define('ax-options', () => `<style>
  :host{display:grid;gap:3px}
  button{display:flex;align-items:center;width:100%;height:18px;border:1px solid #c4c4c4;border-radius:4px;padding-left:7px;gap:3px;font:7px/10px Inter,sans-serif;background:#fff;color:#222}
  .m{width:8px;font:10px/12px "Liberation Sans",sans-serif;color:#777;text-align:center}
  .on{background:#e9f7ea;border-color:#8fb78a}
  </style><button><span class="m">?</span>Fridge</button><button><span class="m">?</span>Personal assistant</button><button class="on"><span class="m">${svg('check', 8)}</span>Balcony</button>`);

define('ax-map', () => `<style>
  :host{display:block;position:relative;height:110px;overflow:hidden}
  .land{width:100%;height:100%}
  text{font:bold 12px "Liberation Sans",sans-serif;fill:#222;stroke:#eee;stroke-width:2px;paint-order:stroke;text-anchor:middle}
  select{position:absolute;right:2px;top:2px;width:36px;height:11px;appearance:none;background:#fff;border:1px solid #888;font:bold 7px/9px "Liberation Sans",sans-serif;padding-left:2px}
  .c{position:absolute;right:6px;top:7px}
  .zoom{position:absolute;left:5px;top:21px;display:grid;gap:1px}
  .zoom button,.man{width:7px;height:6px;background:#fff;font:6px/6px "Liberation Sans",sans-serif;color:#444;border-radius:1px}
  .man{position:absolute;left:5px;top:3px;height:13px;display:grid;place-items:center}
  a{position:absolute;right:0;bottom:0;background:#cfcfcf;font-size:5px;line-height:6px;color:#333}
  </style>
  <svg class="land" viewBox="33 30 381 327" preserveAspectRatio="none">
  <path d="M33 30h381v327H33z" fill="#ababab"/>
  <g fill="#cdcdcd"><path d="M33 82l30-18 30 4 18-10 22 12 12 18-6 18 14-2 10 14 18 12 8 16-14 6-14 10-12 8-8 16-12 14-8 16 4 14-8-4-14-4-12 12 4 18 14 4 12 12 10 8-4 2-20-10-18-8-14-22-10-22-14-20-4-26-6-18z"/>
  <path d="M136 268l14-8 22 4 16 14 24 10-4 20-12 16-10 14-10 12-12 7h-10l-4-30-14-24-4-18z"/>
  <path d="M268 212l-6-12 14-8 2-16 14-8 10-6 12-4 4-14-14-4 6-20 16-12 14 4 10 10 20-4 30-16h24v150l-20 4-20-10-16 10-6-26-24-2-8-10-14-6-16-6z"/>
  <path d="M252 226l20-14 28-2 24 8 22 2 12 26 16 6-14 22-12 20 2 18-14 22-12 20-16 3-8-32-6-32-22-4-22-8-8-22z"/>
  <path d="M96 30l20 14 24-8 10-6zM120 56l20-6 14 18 14 18-10 6-16-14zM236 118l14-4 4 8-12 6zM262 160l8-8 4 16-8 6zM400 300l14-6v40l-14-10z"/></g>
  <path d="M150 30l8 20 14 8 4 20 4 28 6 22 12 14 10-16 6-14 14-12 12-16-4-24 8-14-3-16z" fill="#fff"/>
  <g fill="#e6e6e6"><path d="M252 226l20-14 28-2 24 8 22 2 10 22-28 4-40-2-32-2zM340 224l16-4 22 28-14 14-14-10zM60 92l30-8 20 14-10 14-24-6zM70 200l14 20 16 20 18 8-10-20-16-34zM142 272l30-4 24 18-24 12zM300 108l12-10 14-2-14 20-8 24-8-6zM370 100l20-20 24-8v30zM330 150l30-12 54 6v30l-50-4z"/></g>
  <g fill="#b9b9b9"><path d="M46 120l20-6 14 20-12 16-20-12zM84 150l24 10 10-14-10-20zM126 128l14 4 6 26-14-10zM100 82l16 12-6 12-12-10zM300 258l20 10-4 24-14-8zM340 178l44-2 14 22-30 8zM156 314l20 6-6 24-14-6zM302 184l36 16-16 6-24-8z"/></g>
  <path d="M338 224l18 34" stroke="#8f8f8f" stroke-width="4"/>
  <text x="99" y="186">NORTH</text><text x="98" y="198">AMERICA</text><text x="304" y="249">AFRICA</text><text x="178" y="298">SOUTH</text><text x="178" y="309">AMERICA</text><text x="307" y="182">EUROPE</text>
  <text x="200" y="220" style="font-weight:400;font-size:12px">Atlantic</text><text x="200" y="231" style="font-weight:400;font-size:12px">Ocean</text>
  <path d="M300 176l6-8 10 1 6 7-6 8-11-1z" fill="#2bb3dd"/>
  <path d="M137 200c-4-10-13-14-13-22a13 12 0 0 1 26 0c0 8-9 12-13 22z" fill="#111"/><circle cx="137" cy="179" r="4" fill="#ddd"/>
  <text x="73" y="346" style="font:26px 'Liberation Serif',serif;fill:#f4f4f4;stroke:#888;stroke-width:1px">Google</text></svg>
  <button class="man" aria-label="Street View"><svg width="5" height="11"><circle cx="2.500" cy="2" r="1.500" fill="#aaa"/><path d="M1 4h3v3H3.500v3h-2V7H1z" fill="#aaa"/></svg></button>
  <div class="zoom"><button>+</button><button>−</button></div>
  <select aria-label="Map type"><option>Mapa</option></select><svg class="c" width="4" height="2"><path d="M0 0h4L2 2z" fill="#666"/></svg>
  <a href="#terms">Podmínky použití</a>`);
</script>
</body>
</html>
